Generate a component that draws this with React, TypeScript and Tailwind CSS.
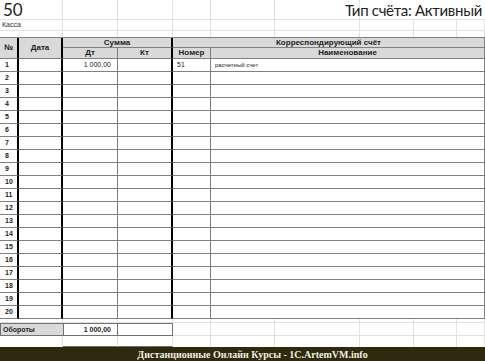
const sans = "font-['Liberation_Sans',Arial,sans-serif]"
const faintCols = 'grid grid-cols-[63px_55px_55px_38px_64px_85px_54px_43px_28px]'
const tableCols = 'grid grid-cols-[19px_44px_55px_55px_38px_274px]'

const rows = Array.from({ length: 20 }, (_, i) => i + 1)

function FaintRow({ h, children }: { h: string; children?: React.ReactNode }) {
  return (
    <div className={`${faintCols} ${h}`}>
      {children ??
        Array.from({ length: 9 }, (_, i) => (
          <div key={i} className="border-r border-b border-[#e2e2e2]" />
        ))}
    </div>
  )
}

export default function App() {
  return (
    <div className={`w-[485px] h-[361px] overflow-hidden bg-white text-black ${sans}`}>
      {/* top area */}
      <div className={`${faintCols} h-[20px] border-b border-[#e2e2e2]`}>
        <div className="border-r border-[#e2e2e2] pl-[3px] font-['Lato',sans-serif] text-[17px] leading-[20px] text-[#222]">
          50
        </div>
        <div className="border-r border-[#e2e2e2]" />
        <div className="border-r border-[#e2e2e2]" />
        <div className="border-r border-[#e2e2e2]" />
        <div className="border-r border-[#e2e2e2]" />
        <div className="border-r border-[#e2e2e2]" />
        <div className="col-span-3 flex justify-end whitespace-nowrap pr-[3px] font-['Lato',sans-serif] text-[15px] leading-[20px] tracking-[-0.3px] text-[#222]">
          Тип счёта: Активный
        </div>
      </div>
      <div className={`${faintCols} h-[10px]`}>
        <div className="border-r border-b border-[#e2e2e2] pl-[2px] text-[7px] leading-[10px] text-[#333]">Касса</div>
        {Array.from({ length: 8 }, (_, i) => (
          <div key={i} className="border-r border-b border-[#e2e2e2]" />
        ))}
      </div>
      <div className={`${faintCols} h-[7px]`}>
        {Array.from({ length: 9 }, (_, i) => (
          <div key={i} className="border-r border-[#e2e2e2]" />
        ))}
      </div>

      {/* table header */}
      <div
        className={`${tableCols} grid-rows-[10px_11px] border-t border-[#808080] bg-[#d9d9d9] text-[8px] font-bold leading-none text-[#222]`}
      >
        <div className="row-span-2 flex items-center justify-center border-r-2 border-b border-r-black border-b-[#808080]">
          №
        </div>
        <div className="row-span-2 flex items-center justify-center border-r-2 border-b border-r-black border-b-[#808080]">
          Дата
        </div>
        <div className="col-span-2 flex items-center justify-center border-r-2 border-b border-r-black border-b-[#808080]">
          Сумма
        </div>
        <div className="col-span-2 flex items-center justify-center border-r border-b border-[#808080]">
          Корреспондирующий счёт
        </div>
        <div className="flex items-center justify-center border-r border-b border-[#808080]">Дт</div>
        <div className="flex items-center justify-center border-r-2 border-b border-r-black border-b-[#808080]">Кт</div>
        <div className="flex items-center justify-center border-r border-b border-[#808080]">Номер</div>
        <div className="flex items-center justify-center border-r border-b border-[#808080]">Наименование</div>
      </div>

      {/* table body */}
      {rows.map((n) => (
        <div key={n} className={`${tableCols} h-[13px] text-[7px] leading-[12px] text-[#222]`}>
          <div className="border-r-2 border-b border-r-black border-b-[#808080] pl-[5px] font-bold">{n}</div>
          <div className="border-r-2 border-b border-r-black border-b-[#808080]" />
          <div className="border-r border-b border-[#808080] pr-[6px] text-right">{n === 1 ? '1 000,00' : ''}</div>
          <div className="border-r-2 border-b border-r-black border-b-[#808080]" />
          <div className="border-r border-b border-[#808080] pl-[4px]">{n === 1 ? '51' : ''}</div>
          <div className="border-r border-b border-[#808080] pl-[4px] text-[6px]">{n === 1 ? 'расчетный счет' : ''}</div>
        </div>
      ))}

      {/* totals */}
      <FaintRow h="h-[4px]" />
      <div className={`${faintCols} h-[13px] text-[7px] leading-[11px] text-[#222]`}>
        <div className="border border-r-0 border-[#707070] bg-[#d9d9d9] pl-[2px] font-bold">Обороты</div>
        <div className="border border-[#707070] pr-[6px] text-right font-bold">1 000,00</div>
        <div className="border border-l-0 border-[#707070]" />
        {Array.from({ length: 6 }, (_, i) => (
          <div key={i} className="border-r border-b border-[#e2e2e2]" />
        ))}
      </div>
      <div className={`${faintCols} h-[11px]`}>
        <div className="border-r border-[#e2e2e2]" />
        <div className="border-r border-b border-[#e2e2e2] border-b-[#707070]" />
        <div className="border-r border-b border-[#e2e2e2] border-b-[#707070]" />
        {Array.from({ length: 6 }, (_, i) => (
          <div key={i} className="border-r border-[#e2e2e2]" />
        ))}
      </div>

      {/* footer */}
      <div className="flex h-[15px] items-center justify-center bg-[#2d2a10] pl-[20px]">
        <span className="whitespace-nowrap font-['Liberation_Serif',serif] text-[10px] font-bold text-[#f3efe0]">
          Дистанционные Онлайн Курсы - 1С.ArtemVM.info
        </span>
      </div>
    </div>
  )
}
